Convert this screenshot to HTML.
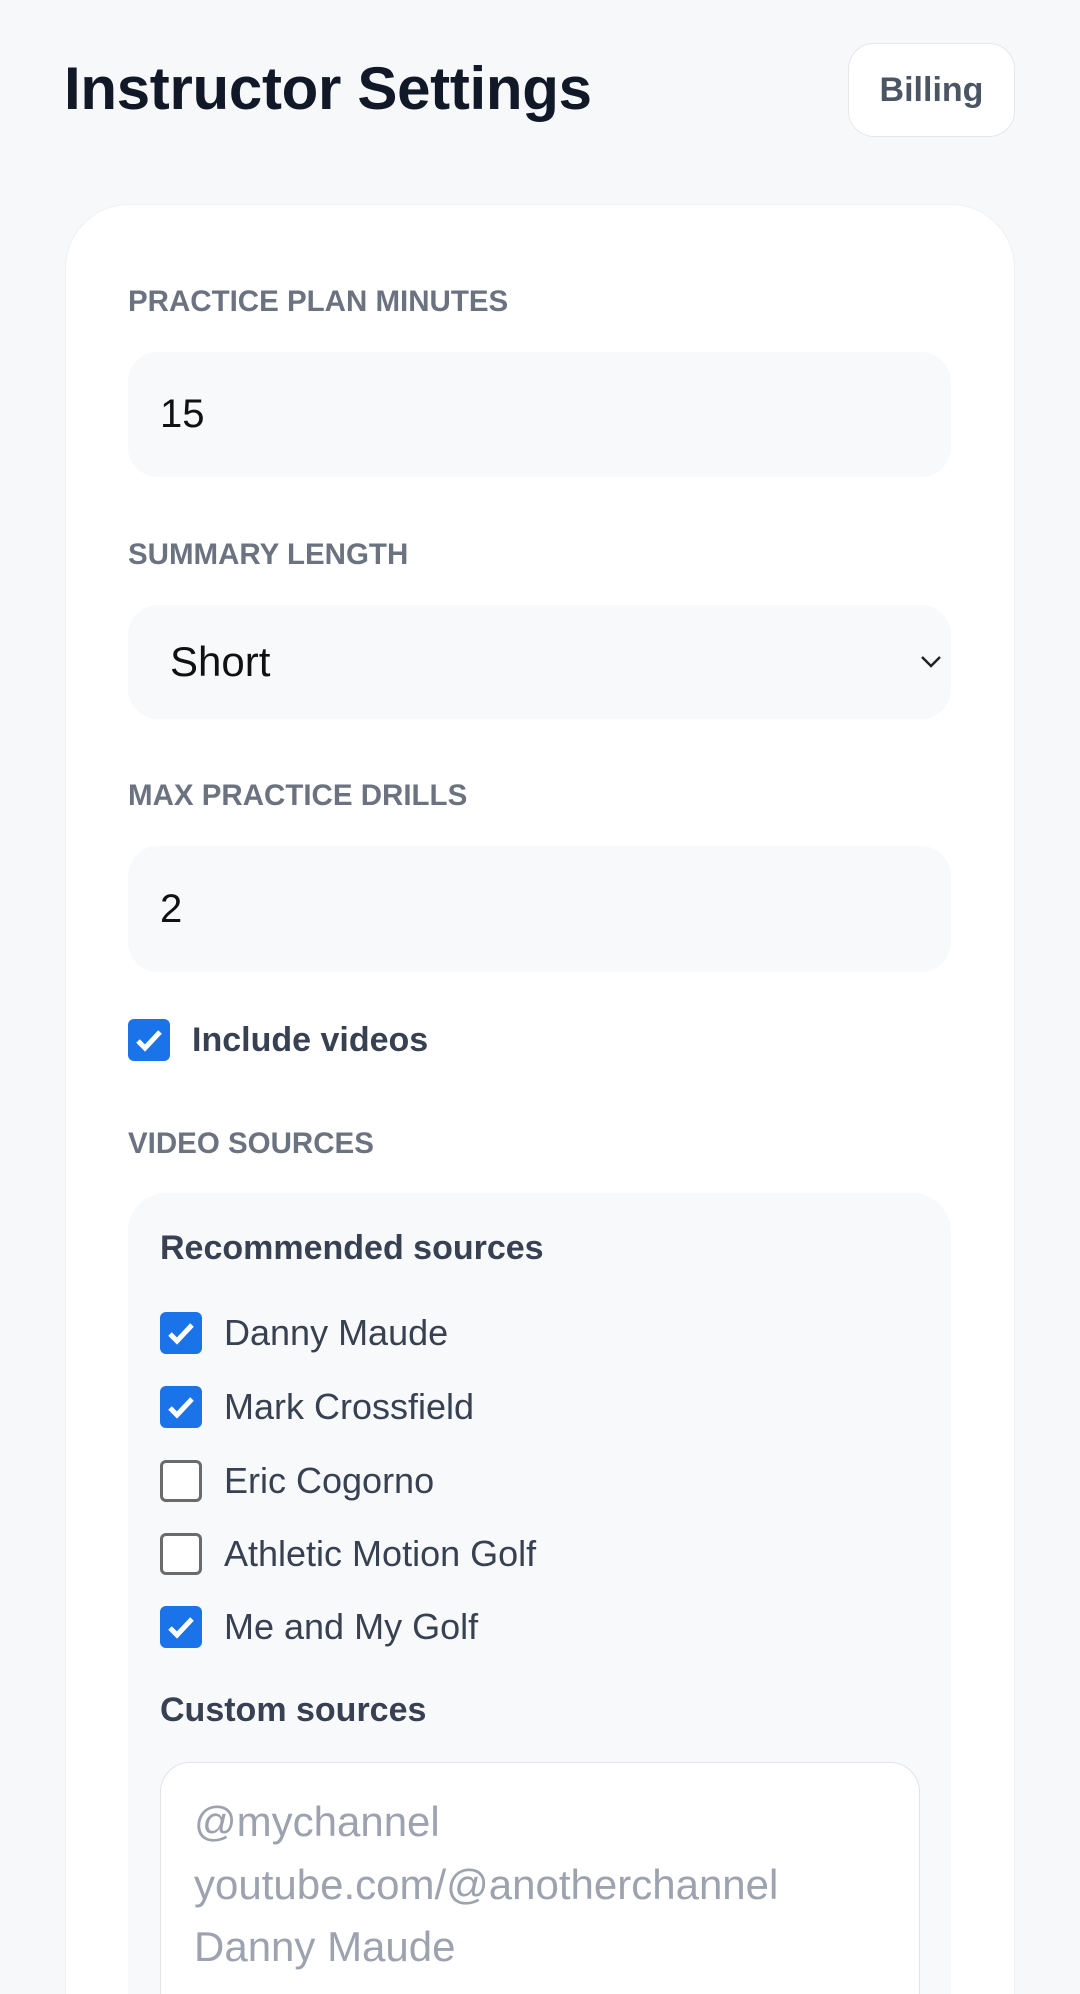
<!DOCTYPE html>
<html><head><meta charset="utf-8"><style>
*{box-sizing:border-box;margin:0;padding:0}
html,body{width:1080px;height:1994px;overflow:hidden;background:#f7f8fa;font-family:"Liberation Sans",sans-serif}
#w{position:relative;width:1080px;height:1994px;overflow:hidden}
.abs{position:absolute}
h1{position:absolute;left:64px;top:54px;font-size:60px;font-weight:700;color:#111827;letter-spacing:-0.3px}
.btn{left:848px;top:43px;width:167px;height:94px;border:1.5px solid #e5e7eb;border-radius:26px;background:#fff;color:#4b5563;font-size:34px;font-weight:700;display:flex;align-items:center;justify-content:center}
.card{left:65px;top:204px;width:950px;height:1860px;background:#fff;border:1.5px solid #eef0f3;border-radius:64px}
.lbl{left:128px;font-size:29.5px;font-weight:700;color:#6b7280;line-height:32px}
.inp{left:128px;width:823px;background:#f8f9fb;border-radius:30px;font-size:40px;color:#111;display:flex;align-items:center}
.cb{width:42px;height:42px;border-radius:6px}
.on{background:#1a73e8}
.off{border:3px solid #6b6b6b;background:#fff}
.row{left:160px;display:flex;align-items:center;height:50px}
.row span{margin-left:22px;font-size:36px;color:#374151}
.h{left:160px;font-size:34px;font-weight:700;color:#374151}
</style></head><body><div id="w">
<h1>Instructor Settings</h1>
<div class="abs btn">Billing</div>
<div class="abs card"></div>
<div class="abs lbl" style="top:286px">PRACTICE PLAN MINUTES</div>
<div class="abs inp" style="top:352px;height:125px;padding-left:32px">15</div>
<div class="abs lbl" style="top:539px">SUMMARY LENGTH</div>
<div class="abs inp" style="top:605px;height:114px;padding-left:42px;font-size:42px">Short
<svg class="abs" style="left:792px;top:48px" width="22" height="16" viewBox="0 0 22 16"><path d="M2 4l9 9 9-9" fill="none" stroke="#222" stroke-width="2.5"/></svg></div>
<div class="abs lbl" style="top:780px">MAX PRACTICE DRILLS</div>
<div class="abs inp" style="top:846px;height:126px;padding-left:32px">2</div>
<div class="abs cb on" style="left:128px;top:1019px"><svg width="42" height="42" viewBox="0 0 42 42"><path d="M10 22l7 7 15-16" fill="none" stroke="#fff" stroke-width="5"/></svg></div>
<div class="abs" style="left:192px;top:1019px;font-size:34px;font-weight:700;color:#374151;line-height:42px">Include videos</div>
<div class="abs lbl" style="top:1128px">VIDEO SOURCES</div>
<div class="abs" style="left:128px;top:1193px;width:823px;height:900px;background:#f8f9fb;border-radius:38px"></div>
<div class="abs h" style="top:1229px">Recommended sources</div>
<div class="abs row" style="top:1308px"><div class="cb on"><svg width="42" height="42" viewBox="0 0 42 42"><path d="M10 22l7 7 15-16" fill="none" stroke="#fff" stroke-width="5"/></svg></div><span>Danny Maude</span></div>
<div class="abs row" style="top:1382px"><div class="cb on"><svg width="42" height="42" viewBox="0 0 42 42"><path d="M10 22l7 7 15-16" fill="none" stroke="#fff" stroke-width="5"/></svg></div><span>Mark Crossfield</span></div>
<div class="abs row" style="top:1456px"><div class="cb off"></div><span>Eric Cogorno</span></div>
<div class="abs row" style="top:1529px"><div class="cb off"></div><span>Athletic Motion Golf</span></div>
<div class="abs row" style="top:1602px"><div class="cb on"><svg width="42" height="42" viewBox="0 0 42 42"><path d="M10 22l7 7 15-16" fill="none" stroke="#fff" stroke-width="5"/></svg></div><span>Me and My Golf</span></div>
<div class="abs h" style="top:1691px">Custom sources</div>
<div class="abs" style="left:160px;top:1762px;width:760px;height:300px;background:#fff;border:1.5px solid #e2e4e8;border-radius:30px;padding:28px 0 0 33px;font-size:42px;line-height:62.5px;color:#9ca3af">@mychannel<br>youtube.com/@anotherchannel<br>Danny Maude</div>
</div></body></html>
